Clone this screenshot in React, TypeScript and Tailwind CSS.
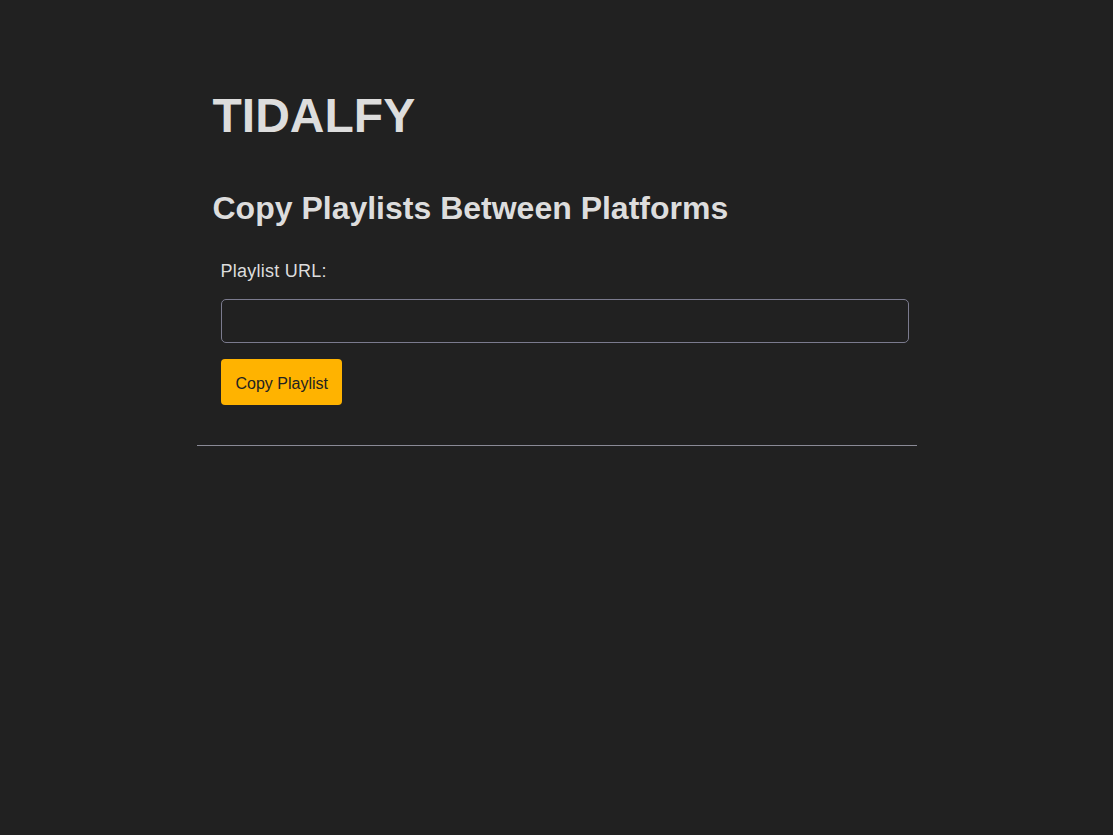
import React, { useState } from 'react';

const App: React.FC = () => {
  const [url, setUrl] = useState('');

  return (
    <div className="min-h-screen bg-[#212121] text-[#dddddd] font-['Liberation_Sans',Arial,sans-serif]">
      <div className="max-w-[720px] mx-auto pt-[88px]">
        <div className="px-4">
          <h1 className="text-[48px] leading-[56px] font-bold">TIDALFY</h1>
          <h2 className="mt-[46px] text-[32px] leading-[36px] font-bold">
            Copy Playlists Between Platforms
          </h2>
        </div>

        <form
          className="pl-6 pr-2 pt-[33px] pb-10 flex flex-col items-start"
          onSubmit={e => e.preventDefault()}
        >
          <label htmlFor="playlist-url" className="text-[18px] leading-6 tracking-[0.25px]">
            Playlist URL:
          </label>
          <input
            id="playlist-url"
            type="text"
            value={url}
            onChange={e => setUrl(e.target.value)}
            className="mt-4 w-full h-[44px] px-3 bg-transparent border border-[#7b7b8e] rounded-[5px] text-[16px] outline-none"
          />
          <button
            type="submit"
            className="mt-4 h-[46px] pl-[15px] pr-[14px] pt-[3px] bg-[#ffb300] text-[#222222] text-[16px] rounded-[4px]"
          >
            Copy Playlist
          </button>
        </form>

        <hr className="border-0 border-t border-[#8a8a96]" />
      </div>
    </div>
  );
};

export default App;
